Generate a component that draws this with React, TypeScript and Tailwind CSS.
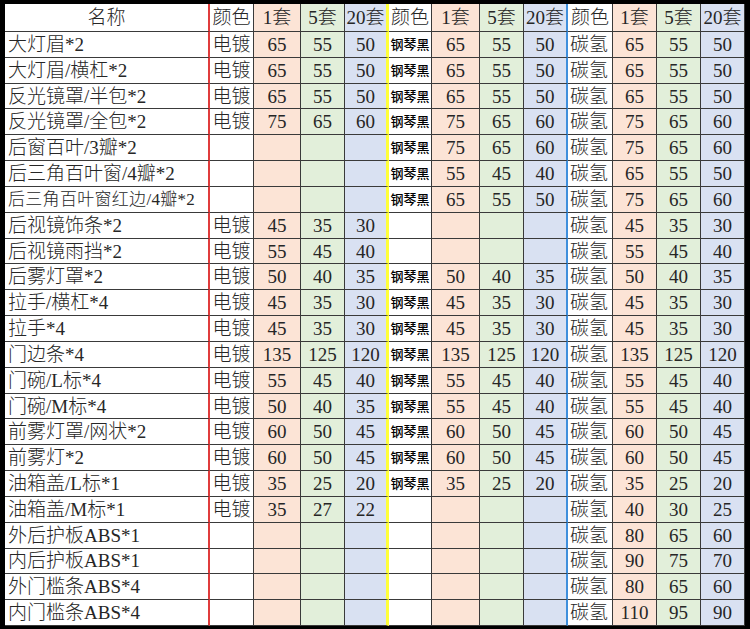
import React from "react";

type Group = [string, string, string] | null;

interface Row {
  name: string;
  small?: boolean;
  a: Group; // 电镀
  b: Group; // 钢琴黑
  c: Group; // 碳氢
}

const rows: Row[] = [
  { name: "大灯眉*2", a: ["65", "55", "50"], b: ["65", "55", "50"], c: ["65", "55", "50"] },
  { name: "大灯眉/横杠*2", a: ["65", "55", "50"], b: ["65", "55", "50"], c: ["65", "55", "50"] },
  { name: "反光镜罩/半包*2", a: ["65", "55", "50"], b: ["65", "55", "50"], c: ["65", "55", "50"] },
  { name: "反光镜罩/全包*2", a: ["75", "65", "60"], b: ["75", "65", "60"], c: ["75", "65", "60"] },
  { name: "后窗百叶/3瓣*2", a: null, b: ["75", "65", "60"], c: ["75", "65", "60"] },
  { name: "后三角百叶窗/4瓣*2", a: null, b: ["55", "45", "40"], c: ["65", "55", "50"] },
  { name: "后三角百叶窗红边/4瓣*2", small: true, a: null, b: ["65", "55", "50"], c: ["75", "65", "60"] },
  { name: "后视镜饰条*2", a: ["45", "35", "30"], b: null, c: ["45", "35", "30"] },
  { name: "后视镜雨挡*2", a: ["55", "45", "40"], b: null, c: ["55", "45", "40"] },
  { name: "后雾灯罩*2", a: ["50", "40", "35"], b: ["50", "40", "35"], c: ["50", "40", "35"] },
  { name: "拉手/横杠*4", a: ["45", "35", "30"], b: ["45", "35", "30"], c: ["45", "35", "30"] },
  { name: "拉手*4", a: ["45", "35", "30"], b: ["45", "35", "30"], c: ["45", "35", "30"] },
  { name: "门边条*4", a: ["135", "125", "120"], b: ["135", "125", "120"], c: ["135", "125", "120"] },
  { name: "门碗/L标*4", a: ["55", "45", "40"], b: ["55", "45", "40"], c: ["55", "45", "40"] },
  { name: "门碗/M标*4", a: ["50", "40", "35"], b: ["55", "45", "40"], c: ["55", "45", "40"] },
  { name: "前雾灯罩/网状*2", a: ["60", "50", "45"], b: ["60", "50", "45"], c: ["60", "50", "45"] },
  { name: "前雾灯*2", a: ["60", "50", "45"], b: ["60", "50", "45"], c: ["60", "50", "45"] },
  { name: "油箱盖/L标*1", a: ["35", "25", "20"], b: ["35", "25", "20"], c: ["35", "25", "20"] },
  { name: "油箱盖/M标*1", a: ["35", "27", "22"], b: null, c: ["40", "30", "25"] },
  { name: "外后护板ABS*1", a: null, b: null, c: ["80", "65", "60"] },
  { name: "内后护板ABS*1", a: null, b: null, c: ["90", "75", "70"] },
  { name: "外门槛条ABS*4", a: null, b: null, c: ["80", "65", "60"] },
  { name: "内门槛条ABS*4", a: null, b: null, c: ["110", "95", "90"] },
];

const cell = "border-b border-r border-[#3a3a3a] flex items-center overflow-hidden whitespace-nowrap";
const peach = "bg-[#fce4d6]";
const green = "bg-[#e2efda]";
const blue = "bg-[#d9e1f2]";

// 每组的最后一列右边线颜色
const groupEdge = [
  "border-r-[3px] border-r-[#ffff3a]",
  "border-r-2 border-r-[#3f8fdc]",
  "",
];

const PriceGroup: React.FC<{ color: string; values: Group; idx: number; colorClass: string }> = ({
  color,
  values,
  idx,
  colorClass,
}) => (
  <>
    <div className={`${cell} bg-white ${colorClass}`}>{values ? color : ""}</div>
    <div className={`${cell} ${peach} justify-center`}>{values?.[0]}</div>
    <div className={`${cell} ${green} justify-center`}>{values?.[1]}</div>
    <div className={`${cell} ${blue} justify-center ${groupEdge[idx]}`}>{values?.[2]}</div>
  </>
);

const HeaderGroup: React.FC<{ idx: number }> = ({ idx }) => (
  <>
    <div className={`${cell} bg-white justify-center`}>颜色</div>
    <div className={`${cell} ${peach} justify-center`}>1套</div>
    <div className={`${cell} ${green} justify-center`}>5套</div>
    <div className={`${cell} ${blue} justify-center ${groupEdge[idx]}`}>20套</div>
  </>
);

export default function App() {
  return (
    <div className="w-[750px] h-[629px] bg-white">
      <div
        className="h-full border-t-4 border-l-[5px] border-r-[5px] border-b-[3px] border-black grid grid-cols-[205px_44px_47px_44px_44px_43px_48px_44px_44px_45px_44px_44px_44px] grid-rows-[28px_repeat(23,25.83px)] text-[19px] font-light leading-none text-[#262626]"
        style={{ fontFamily: '"Liberation Serif", "Noto Sans CJK SC", serif' }}
      >
        {/* 表头 */}
        <div className={`${cell} bg-white justify-center border-r-2 border-r-[#e03c3c]`}>名称</div>
        <HeaderGroup idx={0} />
        <HeaderGroup idx={1} />
        <HeaderGroup idx={2} />

        {rows.map((r) => (
          <React.Fragment key={r.name}>
            <div
              className={`${cell} bg-white pl-[3px] border-r-2 border-r-[#e03c3c] ${
                r.small ? "text-[17px] tracking-[0.3px]" : ""
              }`}
            >
              {r.name}
            </div>
            <PriceGroup color="电镀" values={r.a} idx={0} colorClass="justify-center" />
            <PriceGroup
              color="钢琴黑"
              values={r.b}
              idx={1}
              colorClass="justify-center text-[13px] font-medium text-black"
            />
            <PriceGroup color="碳氢" values={r.c} idx={2} colorClass="pl-[2px]" />
          </React.Fragment>
        ))}
      </div>
    </div>
  );
}
